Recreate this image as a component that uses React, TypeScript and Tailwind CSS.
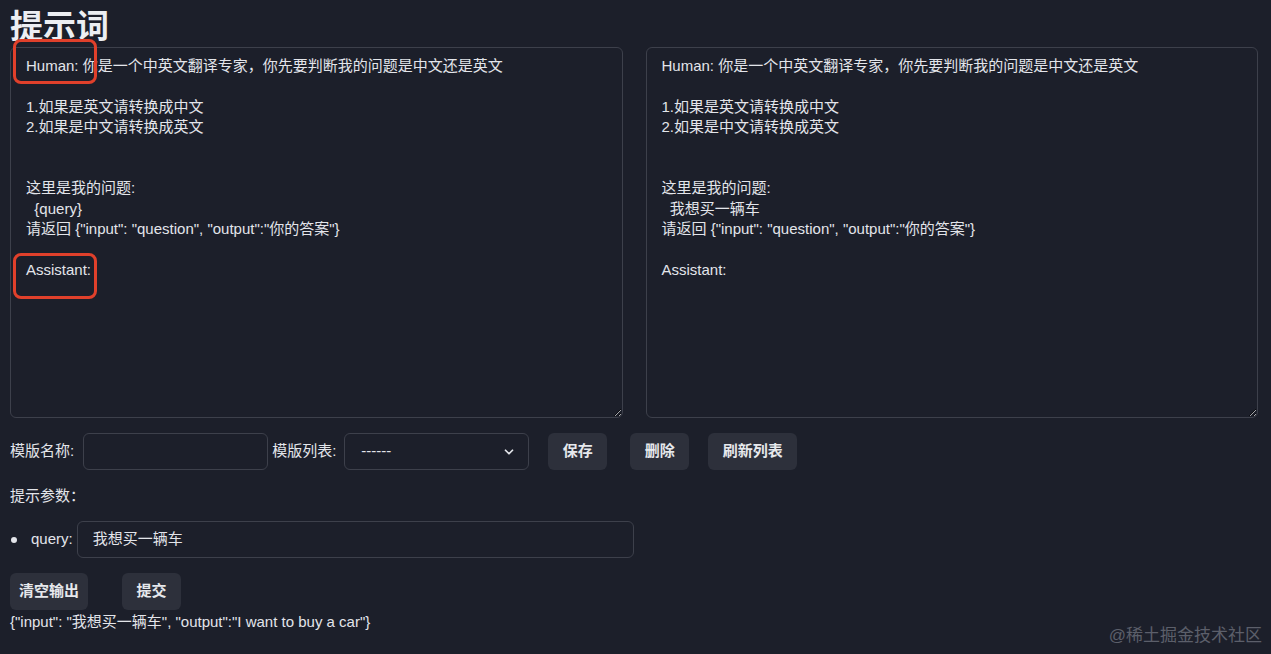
import React from "react";
import { ChevronDown } from "lucide-react";

const leftText = `Human: 你是一个中英文翻译专家，你先要判断我的问题是中文还是英文

1.如果是英文请转换成中文
2.如果是中文请转换成英文


这里是我的问题:
  {query}
请返回 {"input": "question", "output":"你的答案"}

Assistant:`;

const rightText = `Human: 你是一个中英文翻译专家，你先要判断我的问题是中文还是英文

1.如果是英文请转换成中文
2.如果是中文请转换成英文


这里是我的问题:
  我想买一辆车
请返回 {"input": "question", "output":"你的答案"}

Assistant:`;

const font = { fontFamily: '"Liberation Sans", "Noto Sans CJK SC", sans-serif' };

function Btn({ children, w }: { children: React.ReactNode; w: string }) {
  return (
    <button
      className={`h-[37px] ${w} shrink-0 rounded-[6px] bg-[#2d303b] text-[15px] font-bold text-[#e6e8ec] flex items-center justify-center`}
    >
      {children}
    </button>
  );
}

export default function App() {
  return (
    <div
      className="relative w-full h-[654px] overflow-hidden bg-[#1c1f2a] text-[#e3e5ea] pl-[10px] pr-[13px]"
      style={font}
    >
      <h1 className="text-[33px] font-bold leading-[40px] pt-[7px] text-[#eceef2]">提示词</h1>

      <div className="flex gap-[23px]">
        <textarea
          readOnly
          value={leftText}
          className="flex-1 h-[371px] block rounded-[6px] border border-[#3d404b] bg-[#1c1f2a] text-[15px] leading-[20.4px] text-[#e3e5ea] px-[15px] py-[8px] outline-none resize-y"
          style={font}
        />
        <textarea
          readOnly
          value={rightText}
          className="flex-1 h-[371px] block rounded-[6px] border border-[#3d404b] bg-[#1c1f2a] text-[15px] leading-[20.4px] text-[#e3e5ea] px-[15px] py-[8px] outline-none resize-y"
          style={font}
        />
      </div>

      <div className="flex items-center mt-[15px] h-[37px] text-[15px]">
        <span className="mr-[9px]">模版名称:</span>
        <input className="w-[185px] h-[37px] rounded-[6px] border border-[#3d404b] bg-[#1c1f2a] outline-none" />
        <span className="ml-[4px] mr-[8px]">模版列表:</span>
        <div className="relative w-[185px] h-[37px] rounded-[6px] border border-[#3d404b] bg-[#1c1f2a] flex items-center pl-[16px]">
          <span>------</span>
          <ChevronDown className="absolute right-[12px] top-[11px]" size={14} strokeWidth={3} color="#e3e5ea" />
        </div>
        <div className="ml-[19px]">
          <Btn w="w-[59px]">保存</Btn>
        </div>
        <div className="ml-[23px]">
          <Btn w="w-[59px]">删除</Btn>
        </div>
        <div className="ml-[19px]">
          <Btn w="w-[89px]">刷新列表</Btn>
        </div>
      </div>

      <div className="mt-[16px] text-[15px] leading-[20px]">提示参数：</div>

      <ul className="mt-[15px] text-[15px]">
        <li className="flex items-center h-[37px]">
          <span className="w-[6px] h-[6px] rounded-full bg-[#e3e5ea] ml-[1px] mr-[14px]" />
          <span className="mr-[4px]">query:</span>
          <div className="w-[557px] h-[37px] rounded-[6px] border border-[#3d404b] bg-[#1c1f2a] flex items-center pl-[15px]">
            我想买一辆车
          </div>
        </li>
      </ul>

      <div className="flex mt-[15px] gap-[34px]">
        <Btn w="w-[78px]">清空输出</Btn>
        <Btn w="w-[59px]">提交</Btn>
      </div>

      <div className="text-[15px] leading-[20px] mt-[2px]">
        {'{"input": "我想买一辆车", "output":"I want to buy a car"}'}
      </div>

      {/* annotation boxes */}
      <div className="absolute left-[13px] top-[39px] w-[84px] h-[45px] rounded-[8px] border-[3px] border-[#e0402b] pointer-events-none" />
      <div className="absolute left-[13px] top-[253px] w-[84px] h-[46px] rounded-[8px] border-[3px] border-[#e0402b] pointer-events-none" />

      {/* watermark */}
      <div className="absolute right-[9px] bottom-[7px] text-[17px] leading-[22px] text-[#5c5f6a]">@稀土掘金技术社区</div>
    </div>
  );
}
